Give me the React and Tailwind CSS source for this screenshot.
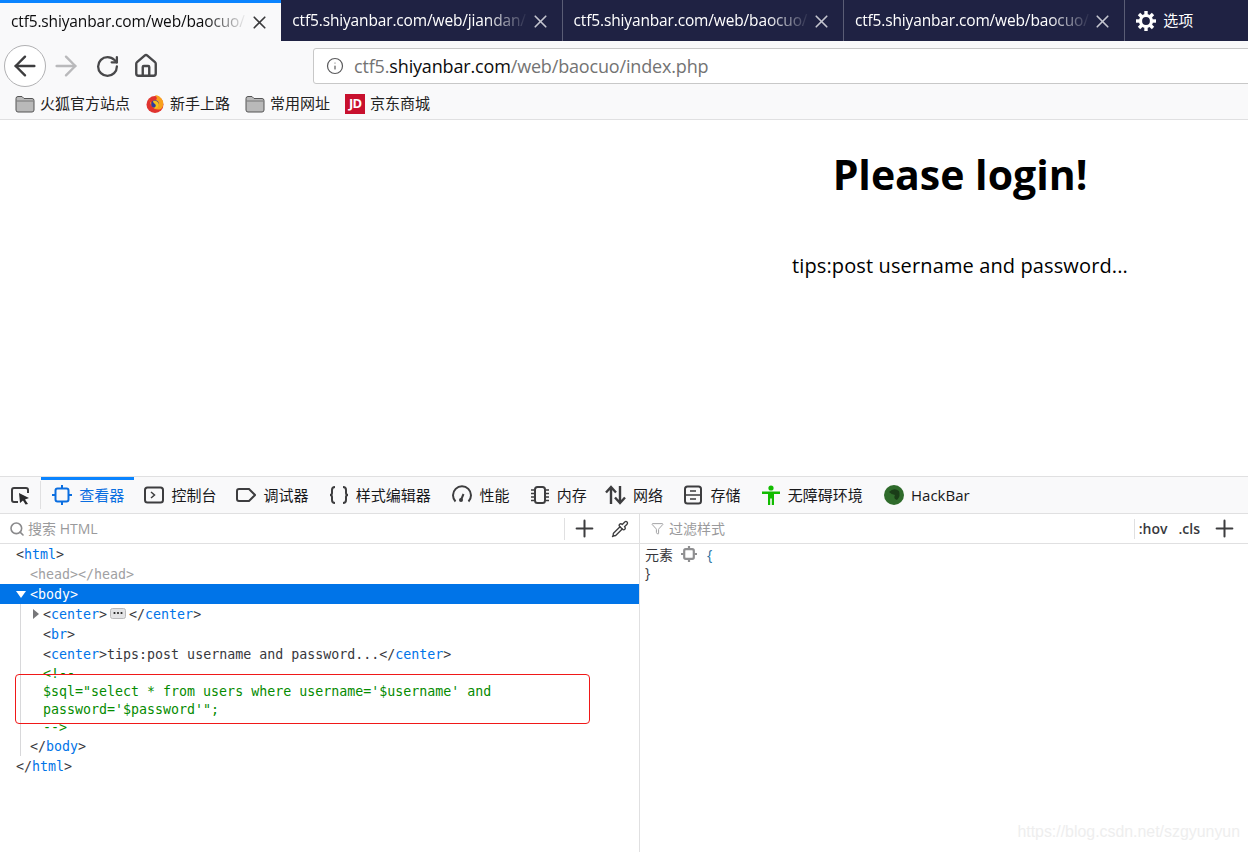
import React from 'react';
import { ArrowLeft, ArrowRight, RotateCw, Home, Info, X, Plus, Search, Pipette, Filter } from 'lucide-react';

const cjk = 'font-["Open_Sans","Noto_Sans_CJK_SC",sans-serif]';

const Folder = () => (
  <svg width="20" height="18" viewBox="0 0 20 18" className="shrink-0">
    <path d="M1 3.5 Q1 1.5 3 1.5 H7 L9 3.5 H17 Q19 3.5 19 5.5 V15 Q19 17 17 17 H3 Q1 17 1 15 Z" fill="#b9b9b9" stroke="#555" strokeWidth="1" />
    <path d="M1.5 6 H18.5" stroke="#777" strokeWidth="1" />
  </svg>
);

const FirefoxLogo = () => (
  <svg width="20" height="20" viewBox="-1 0 20 20" className="shrink-0">
    <circle cx="9" cy="10.5" r="8.5" fill="#e0332f" />
    <path d="M3 5 Q6 18 15 15 Q18 12 17 7 Q14 1 9 1 Q12 4 10 6 Q6 6 6 9 Q3 8 3 5Z" fill="#f9a11c" />
    <circle cx="9" cy="10" r="3.8" fill="#2f3a9e" />
    <path d="M7 7 Q12 6 13 11 Q12 15 8 14 Q11 12 9 10 Q7 9 7 7Z" fill="#f6c21c" />
  </svg>
);

const Tab = ({ label, active, last }) => (
  <div className={`flex items-center w-[281.3px] h-full pl-[11px] shrink-0 ${active ? 'bg-[#f9f9fa] border-t-[3px] border-[#0a84ff] text-[#0c0c0d]' : `text-white pt-[1px] ${last ? '' : 'border-r border-[#5a5d75]'}`}`}>
    <span className="w-[236px] shrink-0 whitespace-nowrap text-[15.5px] tracking-[-0.15px] [mask-image:linear-gradient(to_right,black_82%,transparent)]">{label}</span>
    <X size={21} strokeWidth={1.9} className={`ml-[1.5px] shrink-0 ${active ? 'text-[#3a3a3c]' : 'text-[#c4c5cf]'}`} />
  </div>
);

const Bookmark = ({ icon, label }) => (
  <div className="flex items-center gap-[5px] text-[15px] text-[#222]">
    {icon}
    <span>{label}</span>
  </div>
);

const DevTab = ({ icon, label, active, className = '' }) => (
  <div className={`flex items-center gap-[7.2px] h-full pr-[10px] pl-[10px] text-[15px] ${active ? 'border-t-[3px] border-[#0a84ff] text-[#0a6ee0] pb-[3px] pl-[11px]' : 'text-[#18181a]'} ${className}`}>
    {icon}
    <span>{label}</span>
  </div>
);

const stroke = { fill: 'none', stroke: '#3d3d3f', strokeWidth: 2 };

// small helpers for the tree colours
const T = ({ children }) => <span className="text-[#0074e8]">{children}</span>;
const Row = ({ pad, children, className = '' }) => (
  <div className={`h-[20px] leading-[22px] whitespace-pre ${className}`} style={{ paddingLeft: pad }}>{children}</div>
);

export default function App() {
  return (
    <div className={`relative w-full h-[852px] overflow-hidden bg-white ${cjk}`}>
      {/* tab strip */}
      <div className="flex items-stretch h-[41px] bg-[#1f2243]">
        <Tab label="ctf5.shiyanbar.com/web/baocuo/" active />
        <Tab label="ctf5.shiyanbar.com/web/jiandan/" />
        <Tab label="ctf5.shiyanbar.com/web/baocuo/" />
        <Tab label="ctf5.shiyanbar.com/web/baocuo/" />
        <div className="flex items-center gap-[6px] pl-[10px] text-[15px] text-white">
          <svg width="22" height="22" viewBox="0 0 22 22">
            <circle cx="11" cy="11" r="5.5" fill="none" stroke="white" strokeWidth="3.2" />
            <g stroke="white" strokeWidth="3.4">
              <path d="M11 1 V5" />
              <path d="M11 17 V21" />
              <path d="M1 11 H5" />
              <path d="M17 11 H21" />
              <path d="M4 4 L6.8 6.8" />
              <path d="M15.2 15.2 L18 18" />
              <path d="M18 4 L15.2 6.8" />
              <path d="M6.8 15.2 L4 18" />
            </g>
          </svg>
          <span>选项</span>
        </div>
      </div>

      {/* nav bar */}
      <div className="flex items-center h-[49px] pt-[1px] bg-[#f9f9fa] pl-[4px]">
        <div className="flex items-center justify-center w-[42px] h-[42px] rounded-full bg-white border border-[#b1b1b3] shrink-0">
          <ArrowLeft size={32} strokeWidth={1.8} className="text-[#3d3d3f] shrink-0" />
        </div>
        <ArrowRight size={32} strokeWidth={1.8} className="ml-[4px] text-[#b9b9bb] shrink-0" />
        <RotateCw size={25} strokeWidth={2.2} className="ml-[12.5px] text-[#48484a] shrink-0" />
        <Home size={26} strokeWidth={2.2} className="ml-[13.5px] text-[#48484a] shrink-0" />
        <div className="flex items-center ml-[154px] h-[36px] w-[1000px] shrink-0 bg-white border border-[#c8c8c8] rounded-l-[3px] pl-[12px]">
          <Info size={18} strokeWidth={1.6} className="text-[#5a5a5c]" />
          <span className="ml-[10px] text-[18px] tracking-[-0.16px] text-[#737373]">
            ctf5.<span className="text-[#0c0c0d]">shiyanbar.com</span>/web/baocuo/index.php
          </span>
        </div>
      </div>

      {/* bookmarks */}
      <div className="flex items-center gap-[15px] h-[30px] pl-[15px] pb-[2px] bg-[#f9f9fa] border-b border-[#e0e0e1]">
        <Bookmark icon={<Folder />} label="火狐官方站点" />
        <Bookmark icon={<FirefoxLogo />} label="新手上路" />
        <Bookmark icon={<Folder />} label="常用网址" />
        <Bookmark
          icon={<span className="flex items-center justify-center w-[20px] h-[20px] bg-[#c8102e] text-white text-[13px] font-bold tracking-[-1px]">JD</span>}
          label="京东商城"
        />
      </div>

      {/* page, the window is cropped so the centre sits at 960 */}
      <div className="w-[1920px] h-[356px] text-center text-black">
        <h1 className="pt-[26px] text-[41px] leading-[56px] font-bold">Please login!</h1>
        <p className="mt-[50px] text-[20px] leading-[28px] tracking-[0.12px]">tips:post username and password...</p>
      </div>

      {/* devtools */}
      <div className="border-t border-[#e0e0e1]">
        <div className="flex items-stretch h-[37px] bg-[#f9f9fa] border-b border-[#e0e0e1]">
          <div className="flex items-center w-[41px] pl-[10px] border-r border-[#e0e0e1] my-[4px]">
            <svg width="21" height="20" viewBox="0 0 21 20">
              <path d="M8 17 H4 Q2 17 2 15 V5 Q2 3 4 3 H16 Q18 3 18 5 V8" {...stroke} />
              <path d="M9 8 L19 13 L15 14.5 L18 19 L15.5 19.5 L13 15.5 L10 18 Z" fill="#2a2a2c" />
            </svg>
          </div>
          <DevTab
            active
            label="查看器"
            icon={
              <svg width="20" height="20" viewBox="0 0 20 20" fill="none" stroke="#0a6ee0" strokeWidth="2">
                <rect x="3.5" y="3.5" width="13" height="13" rx="2" />
                <path d="M10 0 V3 M10 17 V20 M0 10 H3 M17 10 H20" />
              </svg>
            }
          />
          <DevTab
            label="控制台"
            icon={
              <svg width="20" height="20" viewBox="0 0 20 20">
                <rect x="1" y="2.5" width="18" height="15" rx="2.5" {...stroke} />
                <path d="M7 7 L10.5 10 L7 13" {...stroke} strokeWidth={1.5} />
              </svg>
            }
          />
          <DevTab
            label="调试器"
            icon={
              <svg width="20" height="20" viewBox="0 0 20 20">
                <path d="M3 4 H13 L19 10 L13 16 H3 Q1 16 1 14 V6 Q1 4 3 4 Z" {...stroke} />
              </svg>
            }
          />
          <DevTab
            label="样式编辑器"
            icon={
              <svg width="20" height="20" viewBox="0 0 20 20">
                <path d="M6 2 Q3 2 3 5 V8 Q3 10 1 10 Q3 10 3 12 V15 Q3 18 6 18" {...stroke} />
                <path d="M14 2 Q17 2 17 5 V8 Q17 10 19 10 Q17 10 17 12 V15 Q17 18 14 18" {...stroke} />
              </svg>
            }
          />
          <DevTab
            className="ml-[1.5px]"
            label="性能"
            icon={
              <svg width="20" height="20" viewBox="0 0 20 20">
                <path d="M3.5 16.5 A9 9 0 1 1 16.5 16.5" {...stroke} />
                <path d="M9 15 L11.5 9" {...stroke} />
                <circle cx="9" cy="15" r="2" fill="#3d3d3f" />
              </svg>
            }
          />
          <DevTab
            label="内存"
            icon={
              <svg width="20" height="20" viewBox="0 0 20 20">
                <rect x="5" y="2" width="10" height="16" rx="2.5" {...stroke} />
                <path d="M1 5 H4 M1 8.5 H4 M1 12 H4 M1 15.5 H4 M16 5 H19 M16 8.5 H19 M16 12 H19 M16 15.5 H19" {...stroke} strokeWidth={1.3} />
              </svg>
            }
          />
          <DevTab
            className="-ml-[2px]"
            label="网络"
            icon={
              <svg width="21" height="20" viewBox="0 0 21 20" fill="none" stroke="#3d3d3f" strokeWidth="2.4">
                <path d="M6 19 V2 M1 7.5 L6 2 L11 7.5" />
                <path d="M15 1 V18 M10 12.5 L15 18 L20 12.5" />
              </svg>
            }
          />
          <DevTab
            className="ml-[0.5px]"
            label="存储"
            icon={
              <svg width="20" height="20" viewBox="0 0 20 20">
                <rect x="2" y="1.5" width="16" height="17" rx="2.5" {...stroke} />
                <path d="M2 10 H18 M7 6 H13 M7 14 H13" {...stroke} strokeWidth={1.6} />
              </svg>
            }
          />
          <DevTab
            className="mr-[1px]"
            label="无障碍环境"
            icon={
              <svg width="20" height="20" viewBox="0 0 20 20" fill="#12bc00">
                <circle cx="10" cy="3" r="2.6" />
                <path d="M1 6.5 H19 V9 H13 V20 H10.8 V13.5 H9.2 V20 H7 V9 H1 Z" />
              </svg>
            }
          />
          <DevTab
            label="HackBar"
            icon={
              <svg width="20" height="20" viewBox="0 0 20 20">
                <circle cx="10" cy="10" r="10" fill="#2f6b2b" />
                <path d="M5 7 Q10 2 15 6 Q17 11 13 15 Q9 14 11 10 Q8 10 5 7Z" fill="#1a3d18" />
              </svg>
            }
          />
        </div>

        <div className="flex h-[338px]">
          {/* markup panel */}
          <div className="relative w-[640px] shrink-0 border-r border-[#e0e0e1]">
            <div className="flex items-center h-[30px] pl-[9px] border-b border-[#e0e0e1]">
              <Search size={16} strokeWidth={2.4} className="text-[#8a8a8c]" />
              <span className="ml-[3px] text-[14px] text-[#9a9a9c]">搜索 HTML</span>
              <div className="ml-auto flex items-center h-[22px]">
                <div className="w-px h-full bg-[#e0e0e1]" />
                <Plus size={27} strokeWidth={1.8} className="ml-[6px] text-[#3d3d3f]" />
                <Pipette size={18} strokeWidth={1.8} className="ml-[13.5px] mr-[10px] text-[#3d3d3f]" />
              </div>
            </div>
            <div className='font-["DejaVu_Sans_Mono",monospace] text-[13.3px] text-[#38383d]'>
              <Row pad={16}>&lt;<T>html</T>&gt;</Row>
              <Row pad={30} className="text-[#a0a0a2]">&lt;head&gt;&lt;/head&gt;</Row>
              <Row pad={16} className="flex items-center pt-[2px] bg-[#0074e8] text-white">
                <span className="-mt-[2px] mr-[3px] w-0 h-0 border-x-[5.5px] border-x-transparent border-t-[7px] border-t-white" />
                <span className="ml-[1px]">&lt;body&gt;</span>
              </Row>
              <div className="relative">
                <div className="absolute left-[20px] top-0 bottom-0 w-px bg-[#d8d8da]" />
                <Row pad={33} className="flex items-center pt-[2px]">
                  <span className="-mt-[2px] mr-[4px] w-0 h-0 border-y-[5px] border-y-transparent border-l-[6px] border-l-[#77777a]" />
                  <span>&lt;<T>center</T>&gt;</span>
                  <svg width="16" height="11" viewBox="0 0 16 11" className="-mt-[3px] mx-[3px] shrink-0">
                    <rect x="0.5" y="0.5" width="15" height="10" rx="2" fill="#e3e3e5" stroke="#b9b9bb" />
                    <circle cx="4.5" cy="5" r="1.1" fill="#222" />
                    <circle cx="8" cy="5" r="1.1" fill="#222" />
                    <circle cx="11.5" cy="5" r="1.1" fill="#222" />
                  </svg>
                  <span>&lt;/<T>center</T>&gt;</span>
                </Row>
                <Row pad={43}>&lt;<T>br</T>&gt;</Row>
                <Row pad={43}>&lt;<T>center</T>&gt;tips:post username and password...&lt;/<T>center</T>&gt;</Row>
                <div className="pl-[43px] text-[#058b00] whitespace-pre leading-[20px]">
                  <div className="h-[18px]">&lt;!--</div>
                  <div className="h-[18px]">$sql="select * from users where username='$username' and</div>
                  <div className="h-[18px]">password='$password'";</div>
                  <div className="h-[18px]">--&gt;</div>
                </div>
                <Row pad={30}>&lt;/<T>body</T>&gt;</Row>
              </div>
              <Row pad={16}>&lt;/<T>html</T>&gt;</Row>
            </div>
            {/* red annotation drawn on the screenshot */}
            <div className="absolute left-[15px] top-[160px] w-[575px] h-[50px] border border-[#f01818] rounded-[4px]" />
          </div>

          {/* rules panel */}
          <div className="flex-1 min-w-0">
            <div className="flex items-center h-[30px] pl-[11px] border-b border-[#e0e0e1]">
              <Filter size={13} strokeWidth={1.8} className="text-[#a0a0a2]" />
              <span className="ml-[5px] text-[14px] text-[#9a9a9c]">过滤样式</span>
              <div className="ml-auto flex items-center h-[20px] text-[14px] font-semibold text-[#38383d]">
                <div className="w-px h-full bg-[#e0e0e1]" />
                <span className="ml-[4px]">:hov</span>
                <span className="ml-[11px]">.cls</span>
                <Plus size={27} strokeWidth={1.8} className="ml-[10.5px] mr-[10.5px] text-[#3d3d3f]" />
              </div>
            </div>
            <div className="pl-[5px] text-[14px] text-[#38383d]">
              <div className="flex items-center h-[20px]">
                <span>元素</span>
                <svg width="16" height="16" viewBox="0 0 16 16" fill="none" stroke="#8f8f91" strokeWidth="2.2" className="ml-[8px]">
                  <rect x="3.2" y="3.2" width="9.6" height="9.6" rx="1.5" />
                  <path d="M8 0 V2.5 M8 13.5 V16 M0 8 H2.5 M13.5 8 H16" />
                </svg>
                <span className="ml-[10px] text-[#2a6f9e]">{'{'}</span>
              </div>
              <div className="h-[18px] leading-[18px]">{'}'}</div>
            </div>
          </div>
        </div>
      </div>

      {/* blog watermark */}
      <div className='absolute right-[8px] bottom-[8px] font-["Liberation_Sans",sans-serif] text-[15.9px] text-[#eeeeee]'>https://blog.csdn.net/szgyunyun</div>
    </div>
  );
}
